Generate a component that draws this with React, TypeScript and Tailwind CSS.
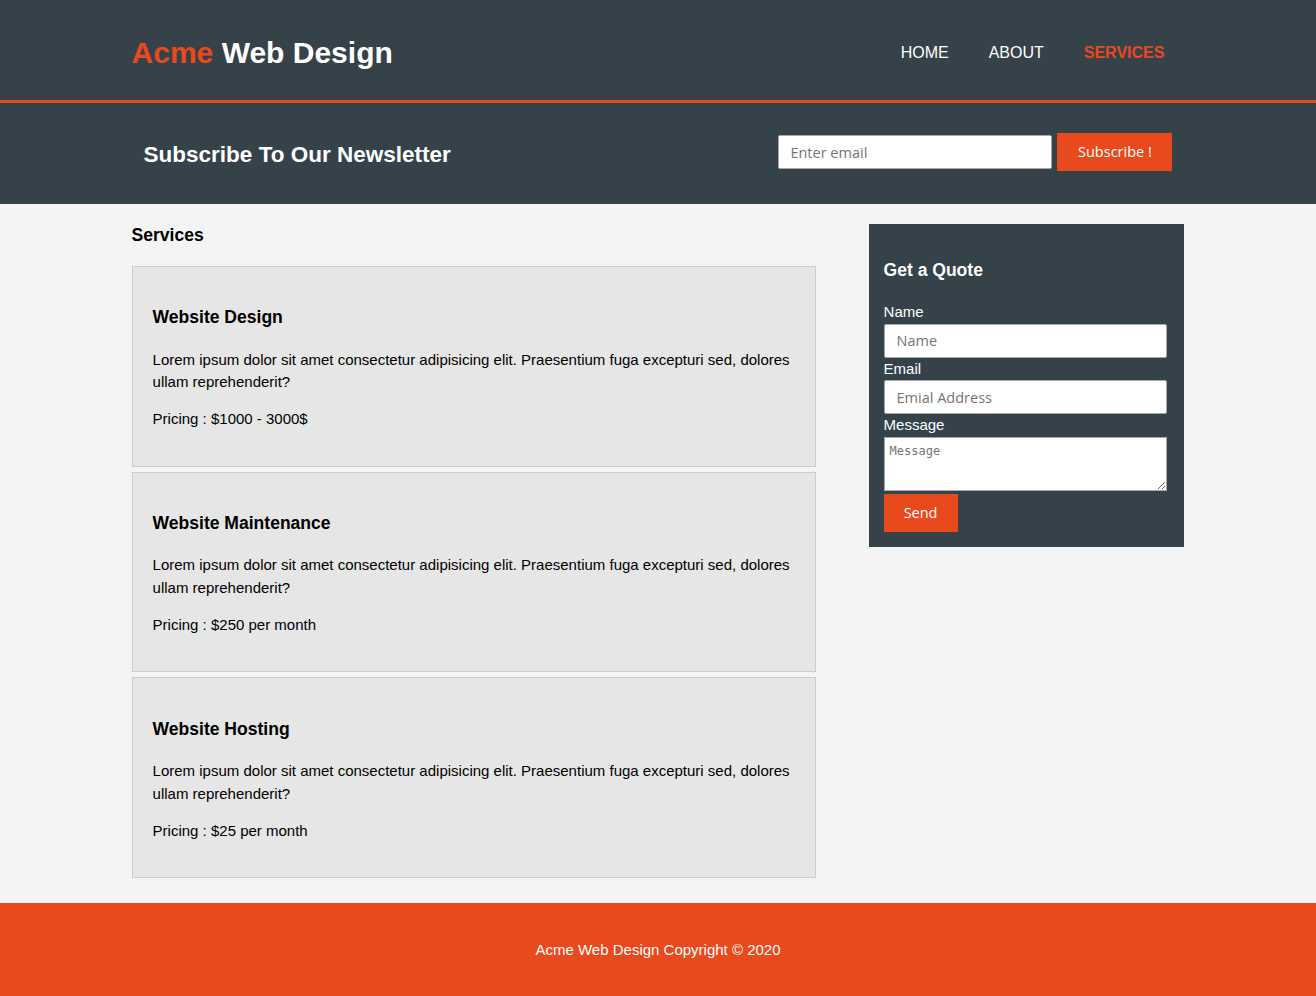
import React from "react";

const services = [
  { title: "Website Design", price: "Pricing : $1000 - 3000$" },
  { title: "Website Maintenance", price: "Pricing : $250 per month" },
  { title: "Website Hosting", price: "Pricing : $25 per month" },
];

const inputFont = "font-['Open_Sans',sans-serif]";

export default function App() {
  return (
    <div className="min-h-[996px] bg-[#f4f4f4] font-['Liberation_Sans',Arial,sans-serif] text-[15px] leading-[22.5px] text-black">
      <header className="bg-[#35424a] text-white pt-[30px] min-h-[103px] border-b-[3px] border-[#e8491d]">
        <div className="w-[80%] mx-auto flex justify-between">
          <h1 className="text-[30px] leading-[45px] font-bold">
            <span className="text-[#e8491d]">Acme</span> Web Design
          </h1>
          <nav className="mt-[11px]">
            <ul className="flex text-[16px] leading-[24px] uppercase">
              <li className="px-5">HOME</li>
              <li className="px-5">ABOUT</li>
              <li className="px-5 text-[#e8491d] font-bold">SERVICES</li>
            </ul>
          </nav>
        </div>
      </header>

      <section className="bg-[#35424a] text-white p-[15px]">
        <div className="w-[80%] mx-auto flex justify-between items-start h-[71px]">
          <h1 className="text-[22.5px] font-bold leading-[71px] pt-[1px]">Subscribe To Our Newsletter</h1>
          <form className="mt-[15px] flex items-center gap-[5px]">
            <input
              type="email"
              placeholder="Enter email"
              className={`${inputFont} w-[274px] h-[34px] px-[11px] bg-white text-black text-[14.5px] border border-[#a8a8a8] rounded-[2px] placeholder:text-[#757575]`}
            />
            <button
              type="button"
              className={`${inputFont} h-[38px] w-[115px] pt-[1px] bg-[#e8491d] text-white text-[14.5px]`}
            >
              Subscribe !
            </button>
          </form>
        </div>
      </section>

      <div className="w-[80%] mx-auto flex justify-between items-start">
        <article className="w-[65%]">
          <h3 className="text-[17.55px] leading-[26.3px] font-bold mt-[17.55px] mb-[17.85px]">Services</h3>
          <ul>
            {services.map((s) => (
              <li key={s.title} className="p-5 border border-[#cccccc] bg-[#e6e6e6] mb-[5px]">
                <h3 className="text-[17.55px] leading-[26.3px] font-bold mt-[17.8px] mb-[17.8px]">{s.title}</h3>
                <p className="mb-[14.3px] leading-[22.8px]">
                  Lorem ipsum dolor sit amet consectetur adipisicing elit. Praesentium fuga excepturi sed, dolores ullam reprehenderit?
                </p>
                <p className="mb-[14.3px] leading-[22.8px]">{s.price}</p>
              </li>
            ))}
          </ul>
        </article>

        <aside className="w-[30%] mt-[20px]">
          <div className="bg-[#35424a] text-white p-[15px]">
            <h3 className="text-[17.55px] leading-[26.3px] font-bold mt-[17.55px] mb-[17.55px]">Get a Quote</h3>
            <form className="pt-[1px]">
              <div>
                <label className="block">Name</label>
                <input
                  type="text"
                  placeholder="Name"
                  className={`${inputFont} block w-[283px] h-[34px] px-[12px] bg-white text-black text-[14.5px] border border-[#a8a8a8] rounded-[2px] placeholder:text-[#757575]`}
                />
              </div>
              <div>
                <label className="block">Email</label>
                <input
                  type="email"
                  placeholder="Emial Address"
                  className={`${inputFont} block w-[283px] h-[34px] px-[12px] bg-white text-black text-[14.5px] border border-[#a8a8a8] rounded-[2px] placeholder:text-[#757575]`}
                />
              </div>
              <div>
                <label className="block">Message</label>
                <textarea
                  placeholder="Message"
                  className="block w-[283px] h-[54px] px-[5px] pt-[6px] pb-[3px] bg-white text-black font-['DejaVu_Sans_Mono',monospace] text-[12px] leading-[15px] border border-[#a8a8a8] placeholder:text-[#757575]"
                />
              </div>
              <button
                type="button"
                className={`${inputFont} mt-[3px] h-[38px] w-[74px] pt-[1px] bg-[#e8491d] text-white text-[14.5px]`}
              >
                Send
              </button>
            </form>
          </div>
        </aside>
      </div>

      <footer className="mt-[20px] bg-[#e8491d] text-white text-center pt-[21px] pb-[21px] px-5">
        <p className="my-[15px]">Acme Web Design Copyright © 2020</p>
      </footer>
    </div>
  );
}
